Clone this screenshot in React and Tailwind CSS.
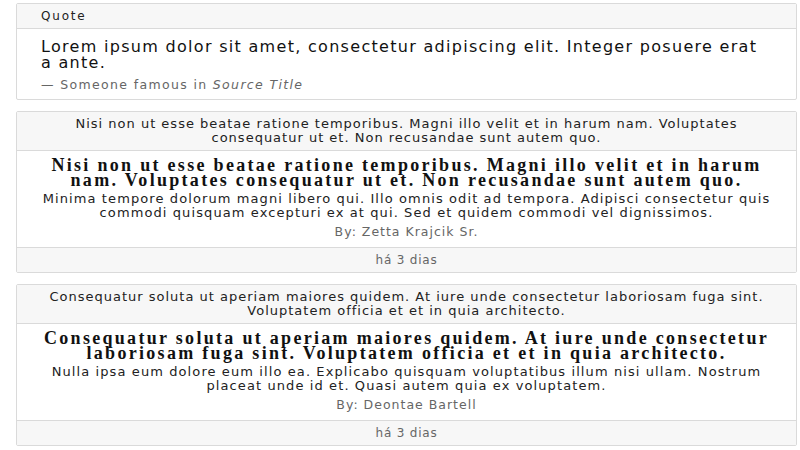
const POSTS = [
  {
    header: "Nisi non ut esse beatae ratione temporibus. Magni illo velit et in harum nam. Voluptates consequatur ut et. Non recusandae sunt autem quo.",
    body: "Minima tempore dolorum magni libero qui. Illo omnis odit ad tempora. Adipisci consectetur quis commodi quisquam excepturi ex at qui. Sed et quidem commodi vel dignissimos.",
    author: "Zetta Krajcik Sr.",
  },
  {
    header: "Consequatur soluta ut aperiam maiores quidem. At iure unde consectetur laboriosam fuga sint. Voluptatem officia et et in quia architecto.",
    body: "Nulla ipsa eum dolore eum illo ea. Explicabo quisquam voluptatibus illum nisi ullam. Nostrum placeat unde id et. Quasi autem quia ex voluptatem.",
    author: "Deontae Bartell",
  },
];

function PostCard({ post }) {
  return (
    <div className="border border-[#dadada] rounded-[2px] bg-white text-center">
      <div className="bg-[#f7f7f7] border-b border-[#dadada] px-6 py-[5px] text-[13px] tracking-[1px] leading-[14px] text-[#222]">
        {post.header}
      </div>
      <div className="px-6 pt-[7px] pb-[8px]">
        <h5 className="font-['Liberation_Serif',serif] font-bold text-[18px] leading-[15px] text-[#111] tracking-[2.3px]">
          {post.header}
        </h5>
        <p className="mt-[4px] text-[13px] tracking-[1.1px] leading-[14px] text-[#222]">{post.body}</p>
        <p className="mt-[5px] text-[12.5px] tracking-[1px] leading-[14px] text-[#666]">By: {post.author}</p>
      </div>
      <div className="bg-[#f7f7f7] border-t border-[#dadada] py-[5px] text-[12px] tracking-[0.8px] leading-[14px] text-[#666]">
        há 3 dias
      </div>
    </div>
  );
}

export default function App() {
  return (
    <div className="w-[800px] h-[450px] overflow-hidden bg-white pl-4 pr-[3px] pt-[3px] font-['DejaVu_Sans',sans-serif] flex flex-col gap-[11px]">
      <div className="border border-[#dadada] rounded-[2px] bg-white">
        <div className="bg-[#f7f7f7] border-b border-[#dadada] px-6 py-[5px] text-[12px] tracking-[1.8px] leading-[14px] text-[#222]">
          Quote
        </div>
        <div className="px-6 pt-[10px] pb-[7px]">
          <p className="text-[16px] tracking-[1.3px] leading-[16px] text-[#111]">
            Lorem ipsum dolor sit amet, consectetur adipiscing elit. Integer posuere erat a ante.
          </p>
          <p className="mt-[7px] text-[12.5px] tracking-[1.35px] leading-[14px] text-[#666]">
            — Someone famous in <cite className="italic">Source Title</cite>
          </p>
        </div>
      </div>
      {POSTS.map((p) => (
        <PostCard key={p.author} post={p} />
      ))}
    </div>
  );
}
